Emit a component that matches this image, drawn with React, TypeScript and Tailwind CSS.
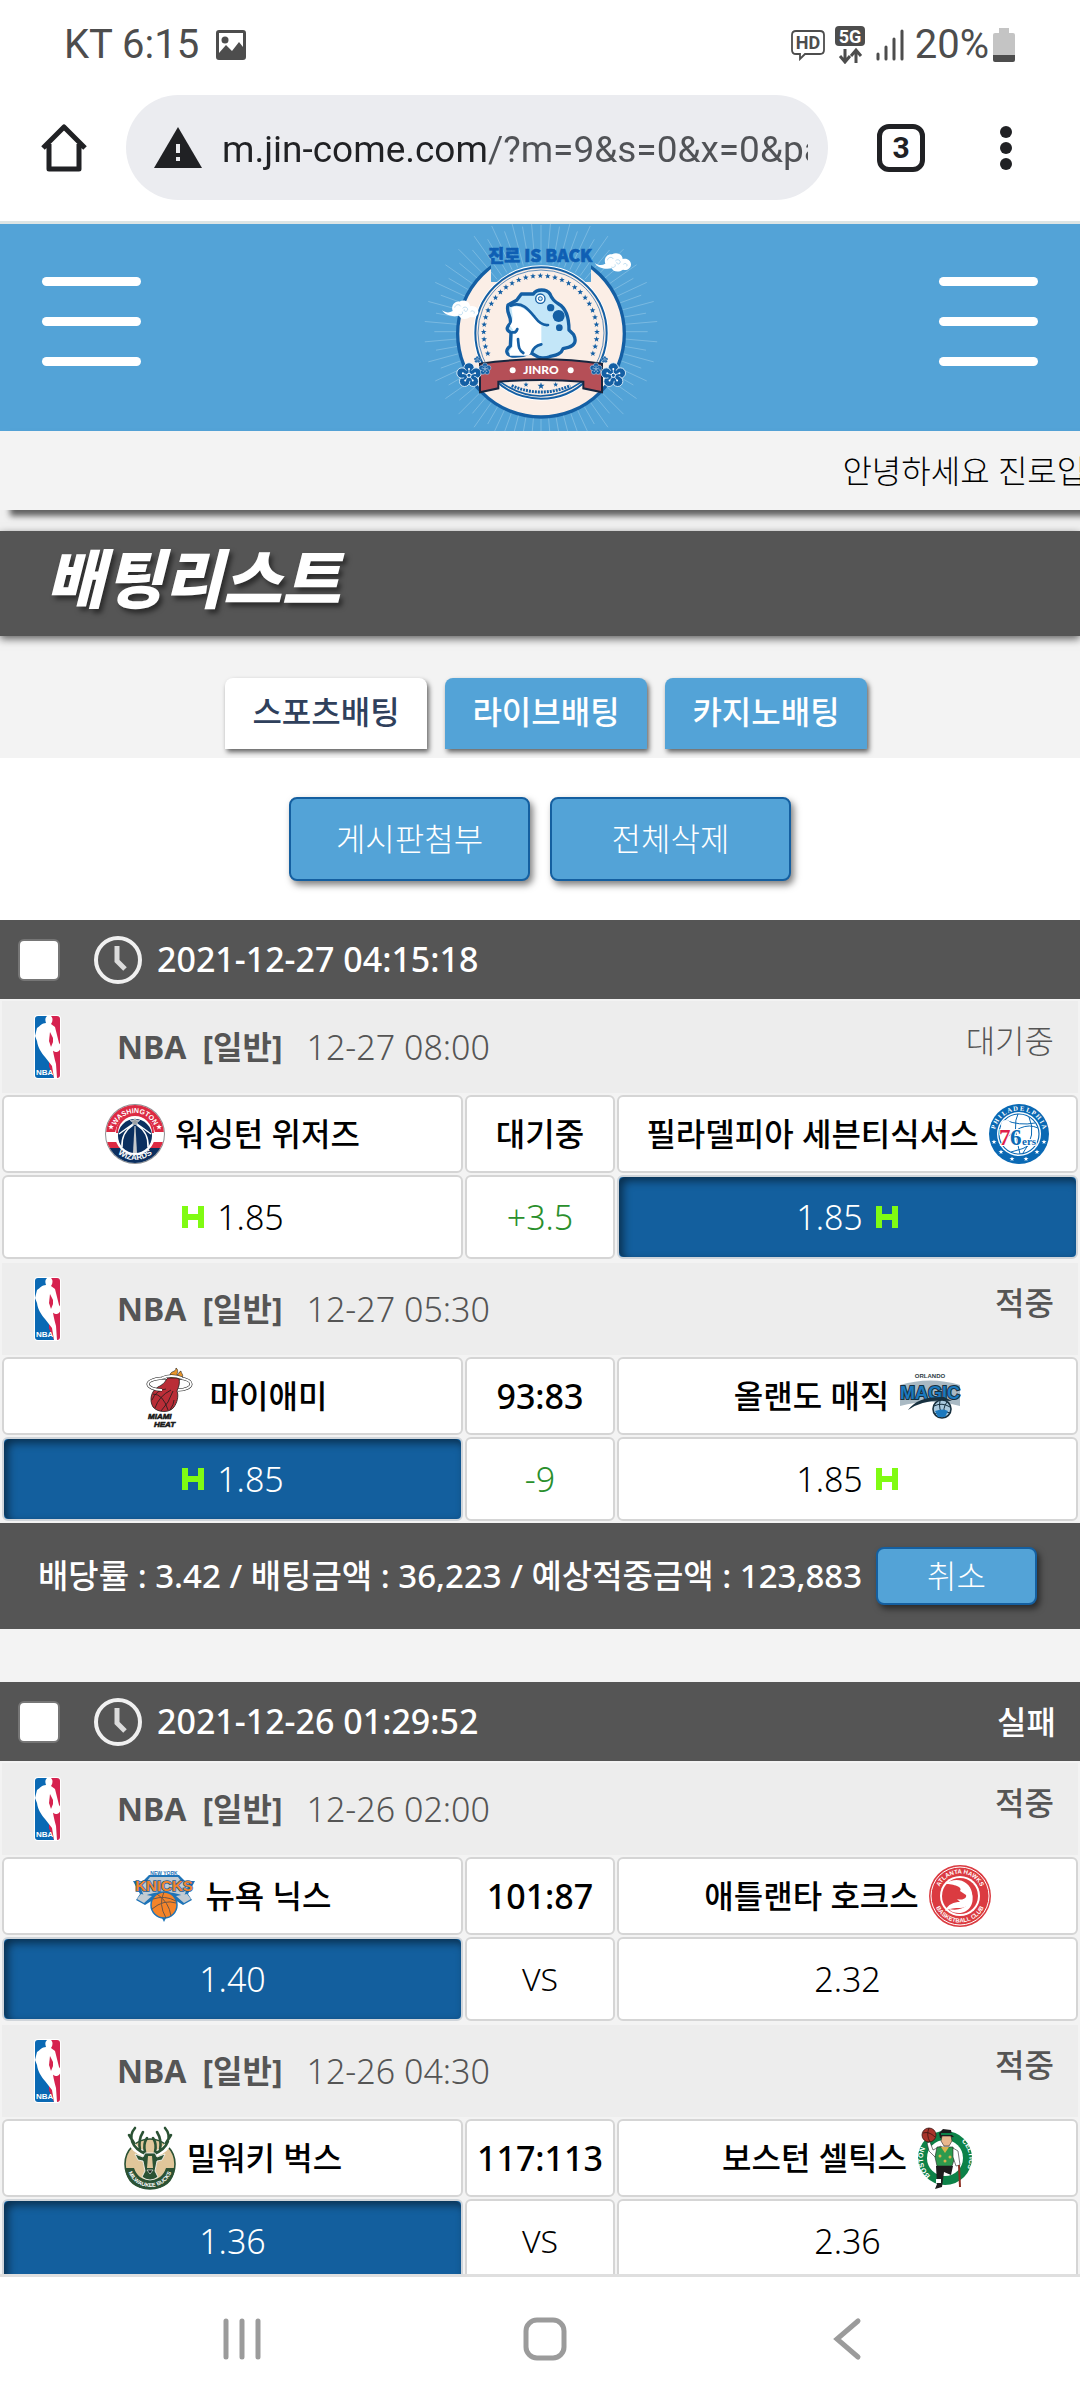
import React from "react";

const NAVY = "#145fa4";
const CREAM = "#fbeee6";

type Side = { name: string; logo: React.ReactNode; odds: string; picked?: boolean };
type Match = {
  id: string;
  time: string;
  status: string;
  pending?: boolean;
  score: string;
  line: string;
  handicap?: boolean;
  home: Side;
  away: Side;
};

function starPoints(cx: number, cy: number, r: number) {
  return Array.from({ length: 10 }, (_, i) => {
    const a = (Math.PI / 5) * i - Math.PI / 2;
    const d = i % 2 ? r * 0.42 : r;
    return `${(cx + d * Math.cos(a)).toFixed(1)},${(cy + d * Math.sin(a)).toFixed(1)}`;
  }).join(" ");
}

function Flower({ x, y, r }: { x: number; y: number; r: number }) {
  const petals = [0, 1, 2, 3, 4].map((i) => (Math.PI * 2 * i) / 5 - Math.PI / 2);
  return (
    <g>
      {petals.map((a) => (
        <circle
          key={a}
          cx={x + Math.cos(a) * r * 0.6}
          cy={y + Math.sin(a) * r * 0.6}
          r={r * 0.42}
          fill={NAVY}
          stroke="#e6f3fb"
          strokeWidth={r * 0.07}
        />
      ))}
      <circle cx={x} cy={y} r={r * 0.45} fill={NAVY} />
      {petals.map((a) => (
        <g key={a}>
          <line
            x1={x}
            y1={y}
            x2={x + Math.cos(a) * r * 0.5}
            y2={y + Math.sin(a) * r * 0.5}
            stroke="#fff"
            strokeWidth={r * 0.06}
          />
          <circle
            cx={x + Math.cos(a) * r * 0.52}
            cy={y + Math.sin(a) * r * 0.52}
            r={r * 0.08}
            fill="#fff"
          />
        </g>
      ))}
      <circle cx={x} cy={y} r={r * 0.17} fill={NAVY} stroke="#fff" strokeWidth={r * 0.08} />
    </g>
  );
}

function Cloud() {
  return (
    <g>
      <path
        d="M0 30c12 8 22 8 32 2c-6-16 6-30 20-28c14-8 32 0 32 14c14-4 26 6 25 17c-1 12-12 18-24 15c-14 10-30 6-34-4c-18 4-40 0-51-16z"
        fill="#fff"
      />
      <path
        d="M38 22c2-10 14-12 18-4M62 24c6-8 18-2 14 6c-4 6-12 2-9-3M50 42c8 4 14-2 11-8M86 34c6-6 14 0 10 6"
        fill="none"
        stroke="#9fcbe8"
        strokeWidth="2"
      />
    </g>
  );
}

function JinroLogo() {
  const rays = Array.from({ length: 72 }, (_, i) => {
    const a = (Math.PI * 2 * i) / 72;
    const end = i % 2 ? 350 : 320;
    return [
      423 + 205 * Math.cos(a),
      350 + 205 * Math.sin(a),
      423 + end * Math.cos(a),
      350 + end * Math.sin(a),
    ];
  });
  const lines = rays.map(([x1, y1, x2, y2], i) => (
    <line key={i} x1={x1} y1={y1} x2={x2} y2={y2} stroke="#79b9e1" strokeWidth="3" />
  ));
  const stars = Array.from({ length: 31 }, (_, i) => {
    const a = ((-202 + (224 / 30) * i) * Math.PI) / 180;
    return starPoints(421 + 170 * Math.cos(a), 352 + 170 * Math.sin(a), 9);
  });

  return (
    <svg viewBox="0 27 840 621" className="h-[207px] w-[280px]" role="img" aria-label="진로 IS BACK">
      <defs>
        <clipPath id="title-gap">
          <rect x="273" y="60" width="300" height="141" />
        </clipPath>
      </defs>
      {lines}
      <circle cx="423" cy="356" r="250" fill={CREAM} stroke={NAVY} strokeWidth="10" />
      <g clipPath="url(#title-gap)">
        <rect x="273" y="60" width="300" height="141" fill="#53a3d7" />
        {lines}
      </g>
      <circle cx="423" cy="354" r="200" fill={CREAM} stroke="#fff" strokeWidth="6" />
      <circle cx="423" cy="354" r="197" fill="none" stroke={NAVY} strokeWidth="6" />
      <circle cx="423" cy="354" r="189" fill="none" stroke={NAVY} strokeWidth="2" />
      {stars.map((p) => (
        <polygon key={p} points={p} fill={NAVY} />
      ))}
      <text
        x="421"
        y="142"
        textAnchor="middle"
        fontFamily="'Noto Sans CJK KR',sans-serif"
        fontWeight="900"
        fontSize="52"
        fill="#0f5fb4"
        stroke="#0f5fb4"
        strokeWidth="2"
      >
        진로 IS BACK
      </text>

      {/* toad */}
      <path
        d="M324 270l26-14l14-19h36c10-16 40-16 50 0c6 16 12 22 26 30c24 14 31 40 31 78l14 14c10 20 2 34-16 38l-16 4c-6 18-24 20-40 24c-14 6-34 4-40-2c-8-4-12-6-16-10c-18 8-30 12-56 10c-20-4-22-18-6-30l2-40c-16-8-14-16-2-28c4-24-14-28-7-55z"
        fill="#c3e6f8"
        stroke={NAVY}
        strokeWidth="10"
        strokeLinejoin="round"
      />
      <path
        d="M334 278c34-16 60 24 90 52v56l-22 12l-16 24h-56c-4-10 0-18 8-26l2-50l-10-14c10-14 10-24 4-54z"
        fill="#fff"
      />
      <path
        d="M332 272c34-14 54 12 72 34c12 16 24 26 40 24M354 372c2 18 0 32 16 42M424 388c-16 4-24 10-28 24M338 352c8 2 12-4 14-10"
        fill="none"
        stroke={NAVY}
        strokeWidth="8"
        strokeLinecap="round"
      />
      <circle cx="421" cy="251" r="14" fill="#fff" stroke={NAVY} strokeWidth="4" />
      <circle cx="421" cy="251" r="6" fill="#c3e6f8" stroke={NAVY} strokeWidth="3" />
      <circle cx="452" cy="278" r="11" fill={NAVY} />
      <circle cx="476" cy="303" r="18" fill={NAVY} />
      <circle cx="478" cy="338" r="10" fill={NAVY} />

      {/* ribbon and small print */}
      <path d="M300 500q120 86 246 0" fill={CREAM} stroke={NAVY} strokeWidth="5" />
      <path d="M335 512q88 38 176 0" fill="none" stroke={NAVY} strokeWidth="9" strokeDasharray="6 3" />
      <path
        d="M240 446q183-26 366 0v86l-56-12v-20q-127-10-255 0v20l-55 12z"
        fill="#b54f57"
        stroke="#17263f"
        strokeWidth="6"
      />
      <polygon points={starPoints(378, 509, 8)} fill={NAVY} />
      <polygon points={starPoints(423, 513, 11)} fill={NAVY} />
      <polygon points={starPoints(467, 509, 8)} fill={NAVY} />
      <circle cx="338" cy="466" r="9" fill="#fff" />
      <circle cx="512" cy="466" r="9" fill="#fff" />
      <text
        x="423"
        y="477"
        textAnchor="middle"
        fontFamily="Lato,sans-serif"
        fontWeight="900"
        fontSize="36"
        fill="#fff"
      >
        JINRO
      </text>
      <Flower x={207} y={481} r={37} />
      <Flower x={640} y={481} r={37} />
      <Flower x={255} y={462} r={18} />
      <Flower x={588} y={462} r={18} />
      <Flower x={232} y={434} r={10} />
      <Flower x={614} y={434} r={10} />
      <g transform="translate(584 114)">
        <Cloud />
      </g>
      <g transform="translate(126 256)">
        <Cloud />
      </g>
    </svg>
  );
}

function NbaLogo() {
  return (
    <svg viewBox="0 0 27 64" className="h-16 w-[27px]" role="img" aria-label="NBA">
      <rect width="27" height="64" rx="4" fill="#fff" />
      <path d="M4 1H15V63H4Q1 63 1 60V4Q1 1 4 1Z" fill="#0a69b4" />
      <path d="M15 1H23Q26 1 26 4V60Q26 63 23 63H15Z" fill="#d6224f" />
      <path d="M11 42l9 21h-8z" fill="#0a69b4" />
      <path
        d="M13 1h4c2 2 2 5 0 8l4 3l2 8l2 8c3 3 2 8-2 9c-4 0-6-3-5-7c1 6 2 12 4 19l1 14h-3l-2-12l-7-9c-4-5-7-9-8-16l-2-5l2-8c3-2 5-5 9-5c-1-3-1-5 1-7z"
        fill="#fff"
      />
      <path d="M16 17l3 6v4l-2 5l-2-6z" fill="#d6224f" />
      <text x="2" y="60" fontFamily="Liberation Sans,sans-serif" fontWeight="700" fontSize="8" fill="#fff">
        NBA
      </text>
    </svg>
  );
}

function WizardsLogo() {
  return (
    <svg viewBox="0 0 60 60" className="size-[60px]" role="img" aria-label="Washington Wizards">
      <defs>
        <path id="wiz-top" d="M9 30a21 21 0 0 1 42 0" />
        <path id="wiz-bottom" d="M4 30a26 26 0 0 0 52 0" />
        <clipPath id="wiz-clip">
          <circle cx="30" cy="30" r="29" />
        </clipPath>
      </defs>
      <circle cx="30" cy="30" r="30" fill="#8d8f92" />
      <g clipPath="url(#wiz-clip)">
        <rect width="60" height="60" fill="#fff" />
        <rect width="60" height="28" fill="#dc2a43" />
        <rect y="38" width="60" height="6" fill="#dc2a43" />
        <rect y="44" width="60" height="16" fill="#0b2f5f" />
      </g>
      <circle cx="30" cy="31" r="20" fill="#fff" />
      <path d="M12 29a18 18 0 0 1 36 0" fill="none" stroke="#dc2a43" strokeWidth="2" />
      <circle cx="30" cy="32" r="17" fill="#0b2f5f" />
      <path
        d="M28 21q-12 8-11 22M32 21q12 8 11 22M14 30q8-6 14-10M46 30q-8-6-14-10"
        fill="none"
        stroke="#fff"
        strokeWidth="1.5"
      />
      <path d="M28 49l1.5-27h1l1.5 27z" fill="#c5c9cc" />
      <polygon points={starPoints(30, 18, 5)} fill="#9da0a3" stroke="#fff" strokeWidth="0.5" />
      <polygon points={starPoints(6, 23, 3)} fill="#fff" />
      <polygon points={starPoints(54, 23, 3)} fill="#fff" />
      <g fontFamily="Liberation Sans,sans-serif" fontWeight="700" fill="#fff">
        <text fontSize="7" textAnchor="middle">
          <textPath href="#wiz-top" startOffset="50%">WASHINGTON</textPath>
        </text>
        <text fontSize="8" textAnchor="middle">
          <textPath href="#wiz-bottom" startOffset="50%">WIZARDS</textPath>
        </text>
      </g>
    </svg>
  );
}

function SixersLogo() {
  return (
    <svg viewBox="0 0 60 60" className="size-[60px]" role="img" aria-label="Philadelphia 76ers">
      <defs>
        <path id="phi-ring" d="M6 36a24.5 24.5 0 1 1 48 0" />
      </defs>
      <circle cx="30" cy="30" r="30" fill="#0a69b4" />
      <circle cx="30" cy="30" r="22" fill="#fff" />
      <circle cx="30" cy="30" r="20" fill="#fff" stroke="#0a69b4" strokeWidth="1.2" />
      <path
        d="M16 16q14 6 30 3M29 10q-6 10 2 40M40 13q8 18-6 36M12 40q20-24 37-16M22 48q12-2 24-10"
        fill="none"
        stroke="#0a69b4"
        strokeWidth="1"
      />
      <circle cx="17" cy="21" r="5" fill="#fff" />
      <g fontFamily="Liberation Serif,serif" fontWeight="700">
        <text fontSize="6.5" fill="#fff" textAnchor="middle">
          <textPath href="#phi-ring" startOffset="50%">P H I L A D E L P H I A</textPath>
        </text>
        <g stroke="#fff" strokeWidth="2" paintOrder="stroke">
          <text x="10" y="41" fontSize="23" fill="#e01f4c">7</text>
          <text x="21" y="41" fontSize="23" fill="#0a69b4">6</text>
          <text x="33" y="41" fontSize="11" fill="#0a69b4">ers</text>
        </g>
      </g>
      {[[5, 38], [12, 48], [23, 55], [37, 55], [48, 48], [55, 38]].map(([x, y]) => (
        <polygon key={x} points={starPoints(x, y, 2.6)} fill="#fff" />
      ))}
    </svg>
  );
}

function HeatLogo() {
  return (
    <svg viewBox="0 0 62 64" className="h-16 w-[62px]" role="img" aria-label="Miami Heat">
      <path d="M32 12c0-6 6-3 6-8c3 2 1 5 1 7c2 0 1-3 4-4c0 3 3 3 1 7l-4 3h-8z" fill="#e8952b" stroke="#1d1d1d" strokeWidth="0.6" />
      <path
        d="M29 14h12c1 6 0 8-2 13c2 5 0 12-3 16c-4 6-16 6-21 0c-4-7-2-16 5-20c4-2 7-4 9-9z"
        fill="#ba2d37"
        stroke="#1d1d1d"
        strokeWidth="0.8"
      />
      <path
        d="M14 36q4-10 14-11M17 44q4-12 16-18M23 47q8-8 12-20M32 46q4-6 4-10M15 30q10 0 15 16"
        fill="none"
        stroke="#1d1d1d"
        strokeWidth="0.8"
      />
      <path d="M29 14c-12 0-19 3-19 6s6 6 14 6M41 14c8 1 12 3 12 6s-5 6-13 6" fill="none" stroke="#1d1d1d" strokeWidth="3" />
      <path d="M29 14c-12 0-19 3-19 6s6 6 14 6M41 14c8 1 12 3 12 6s-5 6-13 6" fill="none" stroke="#fff" strokeWidth="1.8" />
      <path d="M24 14q9-4 20 0" fill="none" stroke="#1d1d1d" strokeWidth="3" />
      <path d="M24 14q9-4 20 0" fill="none" stroke="#fff" strokeWidth="2" />
      <g fontFamily="Liberation Sans,sans-serif" fontWeight="700" fontStyle="italic" fontSize="8" fill="#1a1a1a" stroke="#1a1a1a" strokeWidth="0.6">
        <text x="10" y="55">MIAMI</text>
        <text x="16" y="63">HEAT</text>
      </g>
    </svg>
  );
}

function MagicLogo() {
  return (
    <svg viewBox="0 0 62 50" className="h-[50px] w-[62px]" role="img" aria-label="Orlando Magic">
      <text
        x="31"
        y="7"
        textAnchor="middle"
        fontFamily="Liberation Sans,sans-serif"
        fontWeight="700"
        fontSize="6"
        fill="#2c3a42"
      >
        ORLANDO
      </text>
      <path d="M1 14q30-9 60 0v21q-30-8-60 0z" fill="#a9b9c3" />
      <g
        fontFamily="Liberation Sans,sans-serif"
        fontWeight="700"
        fontSize="18"
        textAnchor="middle"
        fill="#1c79be"
        stroke="#17303f"
        strokeWidth="2"
        paintOrder="stroke"
      >
        <text x="31" y="28">MAGIC</text>
      </g>
      <path d="M9 39q10-14 36-13l8 4q-28-3-44 9z" fill="#17303f" />
      <circle cx="43" cy="38" r="9" fill="#a9c9de" stroke="#17303f" strokeWidth="1.6" />
      <path d="M35 35q8-4 16 1M36 43q8-4 15-1M41 30q-2 8 4 16M48 31q-5 6-2 15" fill="none" stroke="#17303f" strokeWidth="1" />
      <path d="M36 40q8-3 13 0l-3 6h-7z" fill="#1c79be" />
    </svg>
  );
}

function KnicksLogo() {
  return (
    <svg viewBox="0 0 62 54" className="h-[54px] w-[62px]" role="img" aria-label="New York Knicks">
      <path d="M0 12h10l6-6h30l6 6h10l-7 13l4 6l-9 5l-8-5l-11 22l-11-22l-8 5l-9-5l4-6z" fill="#1e74b8" />
      <path d="M8 25l-4 5l7 4l8-7zM54 25l4 5l-7 4l-8-7z" fill="#c2cbd2" />
      <path d="M5 13l9-1l3-4h28l3 4l9 1l-6 14q-20-8-40 0z" fill="#c2cbd2" />
      <g fontFamily="Liberation Sans,sans-serif" fontWeight="700" textAnchor="middle">
        <text x="31" y="6" fontSize="5" fill="#1e74b8">
          NEW YORK
        </text>
        <text x="31" y="22" fontSize="15" fill="#f5842a" stroke="#1e5f96" strokeWidth="1.5" paintOrder="stroke">
          KNICKS
        </text>
      </g>
      <circle cx="31" cy="36" r="13" fill="#f5842a" stroke="#1e74b8" strokeWidth="1.5" />
      <path
        d="M31 23q-6 12 2 26M20 30q12-4 23 2M19 40q12-10 24-6M24 25q12 8 14 22"
        fill="none"
        stroke="#6d5648"
        strokeWidth="1"
      />
    </svg>
  );
}

function HawksLogo() {
  return (
    <svg viewBox="0 0 62 62" className="size-[62px]" role="img" aria-label="Atlanta Hawks">
      <defs>
        <path id="atl-top" d="M8.5 31a22.5 22.5 0 0 1 45 0" />
        <path id="atl-bottom" d="M4.500 31a26.500 26.500 0 0 0 53 0" />
      </defs>
      <circle cx="31" cy="31" r="31" fill="#db3b41" />
      <circle cx="31" cy="31" r="29" fill="none" stroke="#fff" strokeWidth="1" />
      <circle cx="31" cy="31" r="20" fill="#fff" />
      <circle cx="31" cy="31" r="18" fill="#db3b41" />
      <path
        d="M16 19c10-8 25-4 27 9c2 9-5 15-12 15c-5 0-10 0-15 3c3-7 9-9 15-9l-3-3c7 2 10-2 9-4l-6-4c3-4-6-7-15-7z"
        fill="#fff"
      />
      <path d="M20 44c14 3 24-5 22-18c5 12-2 22-12 22c-4 0-8-1-10-4z" fill="#fff" />
      <circle cx="28" cy="27" r="1.6" fill="#db3b41" />
      <g fontFamily="Liberation Sans,sans-serif" fontWeight="700" fontSize="6" fill="#fff" textAnchor="middle">
        <text>
          <textPath href="#atl-top" startOffset="50%">ATLANTA HAWKS</textPath>
        </text>
        <text>
          <textPath href="#atl-bottom" startOffset="50%">BASKETBALL CLUB</textPath>
        </text>
      </g>
    </svg>
  );
}

function BucksLogo() {
  return (
    <svg viewBox="0 0 54 64" className="h-16 w-[54px]" role="img" aria-label="Milwaukee Bucks">
      <defs>
        <path id="mil-bottom" d="M4 38a23 23 0 0 0 46 0" />
      </defs>
      <circle cx="27" cy="38" r="25" fill="#e0c69a" stroke="#2b5234" strokeWidth="1.6" />
      <path d="M2 42h9q4 12 16 12t16-12h9q-2 21-25 21T2 42z" fill="#2b5234" />
      <g fill="none" stroke="#fff" strokeWidth="6" strokeLinejoin="round">
        <path d="M22 28C6 22 4 10 12 2M32 28C48 22 50 10 42 2" />
      </g>
      <g fill="none" stroke="#2b5234" strokeWidth="2.6" strokeLinecap="round" strokeLinejoin="round">
        <path d="M23 28C8 22 5 10 12 2M31 28C46 22 49 10 42 2M11 17L6 9M43 17L48 9M17 24Q15 14 20 6M37 24Q39 14 34 6M22 26Q20 18 24 12M32 26Q34 18 30 12" />
      </g>
      <path d="M22 27h10l2 4l8-3l-3 6l-5 1l-2 10l3 6q-8 6-16 0l3-6l-2-10l-5-1l-3-6l8 3z" fill="#2b5234" stroke="#fff" strokeWidth="0.8" />
      <path d="M25 30h4l1 12h-6z" fill="#e0c69a" />
      <path d="M24 44h6l-3 4z" fill="#14241a" stroke="#fff" strokeWidth="0.6" />
      <text fontFamily="Liberation Sans,sans-serif" fontWeight="700" fontSize="5.5" fill="#fff" textAnchor="middle">
        <textPath href="#mil-bottom" startOffset="50%">MILWAUKEE BUCKS</textPath>
      </text>
    </svg>
  );
}

function CelticsLogo() {
  return (
    <svg viewBox="0 0 56 62" className="h-[62px] w-14" role="img" aria-label="Boston Celtics">
      <defs>
        <path id="bos-left" d="M16 51A24 24 0 0 1 10 18" />
        <path id="bos-right" d="M38 10A24 24 0 0 1 46 48" />
      </defs>
      <circle cx="28" cy="31" r="27" fill="#0d8248" />
      <circle cx="28" cy="31" r="18" fill="#fff" />
      <g fontFamily="Liberation Sans,sans-serif" fontWeight="700" fontSize="7" fill="#fff" textAnchor="middle">
        <text>
          <textPath href="#bos-left" startOffset="50%">BOSTON</textPath>
        </text>
        <text>
          <textPath href="#bos-right" startOffset="50%">CELTICS</textPath>
        </text>
      </g>
      <circle cx="12" cy="8" r="7" fill="#a8342b" stroke="#3a1512" strokeWidth="0.8" />
      <path d="M6 6q6-2 12 4M12 1q-3 7 1 14" fill="none" stroke="#3a1512" strokeWidth="0.8" />
      <path d="M13 15l3 8l8-4l2 5l-8 6l-6-6l-2-8z" fill="#fff" stroke="#222" strokeWidth="0.6" />
      <path d="M22 6l4-4l8 1l1 5l2 2l-14 1z" fill="#1d1d1d" />
      <path d="M24 6h11v2H24z" fill="#0d8248" />
      <path d="M25 9h9l1 5l-3 5h-5l-3-5z" fill="#eab78d" stroke="#222" strokeWidth="0.6" />
      <path d="M20 20h16l2 10l-3 9H20l-2-9z" fill="#2d9a4e" stroke="#222" strokeWidth="0.6" />
      <path d="M24 20h8l-4 6z" fill="#d9b24c" />
      <circle cx="23" cy="29" r="1.5" fill="#d9b24c" />
      <circle cx="33" cy="30" r="1.5" fill="#d9b24c" />
      <circle cx="28" cy="34" r="1.5" fill="#d9b24c" />
      <path d="M36 21l5 3l2 14l-4 1l-3-9z" fill="#fff" stroke="#222" strokeWidth="0.6" />
      <path d="M19 39h17l-2 9l-7-3l-2 15l-7 2l2-5z" fill="#1d1d1d" />
      <path d="M19 52h5v4h-5z" fill="#fff" />
      <path d="M42 38l1 22" stroke="#8d2f22" strokeWidth="2" />
    </svg>
  );
}

const slips: {
  id: string;
  placedAt: string;
  result?: string;
  summary?: string;
  matches: Match[];
}[] = [
  {
    id: "slip-1",
    placedAt: "2021-12-27 04:15:18",
    summary: "배당률 : 3.42 / 배팅금액 : 36,223 / 예상적중금액 : 123,883",
    matches: [
      {
        id: "was-phi",
        time: "12-27 08:00",
        status: "대기중",
        pending: true,
        score: "대기중",
        line: "+3.5",
        handicap: true,
        home: { name: "워싱턴 위저즈", logo: <WizardsLogo />, odds: "1.85" },
        away: { name: "필라델피아 세븐티식서스", logo: <SixersLogo />, odds: "1.85", picked: true },
      },
      {
        id: "mia-orl",
        time: "12-27 05:30",
        status: "적중",
        score: "93:83",
        line: "-9",
        handicap: true,
        home: { name: "마이애미", logo: <HeatLogo />, odds: "1.85", picked: true },
        away: { name: "올랜도 매직", logo: <MagicLogo />, odds: "1.85" },
      },
    ],
  },
  {
    id: "slip-2",
    placedAt: "2021-12-26 01:29:52",
    result: "실패",
    matches: [
      {
        id: "nyk-atl",
        time: "12-26 02:00",
        status: "적중",
        score: "101:87",
        line: "VS",
        home: { name: "뉴욕 닉스", logo: <KnicksLogo />, odds: "1.40", picked: true },
        away: { name: "애틀랜타 호크스", logo: <HawksLogo />, odds: "2.32" },
      },
      {
        id: "mil-bos",
        time: "12-26 04:30",
        status: "적중",
        score: "117:113",
        line: "VS",
        home: { name: "밀워키 벅스", logo: <BucksLogo />, odds: "1.36", picked: true },
        away: { name: "보스턴 셀틱스", logo: <CelticsLogo />, odds: "2.36" },
      },
    ],
  },
];

function HandicapMark() {
  return (
    <svg viewBox="0 0 24 24" className="size-6" aria-hidden="true">
      <path d="M1 1h6v8h10V1h6v22h-6v-8H7v8H1z" fill="#80fb12" />
    </svg>
  );
}

function OddsCell({ side, handicap, away }: { side: Side; handicap?: boolean; away?: boolean }) {
  return (
    <td
      className={
        side.picked
          ? "h-[84px] rounded-md border-2 border-[#d0d5da] bg-[#135f9e] p-0 font-light text-white shadow-[inset_4px_4px_8px_rgba(0,0,0,0.5)]"
          : "h-[84px] rounded-md border-2 border-[#d5d5d5] bg-white p-0 font-light text-black"
      }
    >
      <div className="flex items-center justify-center gap-3 text-[34px]">
        {handicap && !away && <HandicapMark />}
        <span>{side.odds}</span>
        {handicap && away && <HandicapMark />}
      </div>
    </td>
  );
}

function MatchTable({ match }: { match: Match }) {
  return (
    <table className="w-full table-fixed border-separate border-spacing-[2px] bg-[#f3f3f3] text-center leading-10">
      <colgroup>
        <col className="w-[43%]" />
        <col className="w-[14%]" />
        <col className="w-[43%]" />
      </colgroup>
      <tbody>
        <tr>
          <td colSpan={3} className="h-[92px] bg-[#ededed] p-0 text-[#555]">
            <div className="flex items-center pr-6 pl-8">
              <NbaLogo />
              <span className="ml-14 font-bold">NBA</span>
              <span className="ml-4 font-bold">[일반]</span>
              <span className="ml-6 text-[34px] font-light">{match.time}</span>
              <span className={match.pending ? "mb-3 ml-auto font-light" : "mb-3 ml-auto font-medium"}>
                {match.status}
              </span>
            </div>
          </td>
        </tr>
        <tr className="font-medium text-black">
          <td className="h-[78px] rounded-md border-2 border-[#d5d5d5] bg-white p-0">
            <div className="flex items-center justify-center gap-2.5">
              {match.home.logo}
              {match.home.name}
            </div>
          </td>
          <td className="h-[78px] rounded-md border-2 border-[#d5d5d5] bg-white p-0">
            <span className={match.pending ? "" : "text-[34px]"}>{match.score}</span>
          </td>
          <td className="h-[78px] rounded-md border-2 border-[#d5d5d5] bg-white p-0">
            <div className="flex items-center justify-center gap-2.5">
              {match.away.name}
              {match.away.logo}
            </div>
          </td>
        </tr>
        <tr>
          <OddsCell side={match.home} handicap={match.handicap} />
          <td
            className={
              match.handicap
                ? "h-[84px] rounded-md border-2 border-[#d5d5d5] bg-white p-0 text-[34px] font-light text-[#2a8f2c]"
                : "h-[84px] rounded-md border-2 border-[#d5d5d5] bg-white p-0 font-light text-black"
            }
          >
            {match.line}
          </td>
          <OddsCell side={match.away} handicap={match.handicap} away />
        </tr>
      </tbody>
    </table>
  );
}

function StatusBar() {
  return (
    <div className="flex h-[90px] items-center justify-between pr-[65px] pl-16 font-[Roboto,sans-serif] text-[40px] text-[#4d4d4d]">
      <div className="flex items-center gap-4">
        <span>KT 6:15</span>
        <svg viewBox="0 0 32 32" className="size-8" aria-hidden="true">
          <path
            fillRule="evenodd"
            d="M4 1h24q3 0 3 3v24q0 3-3 3H4q-3 0-3-3V4q0-3 3-3zM4 4v20l7-8l6 6l7-9l4 5V4z"
            fill="#4d4d4d"
          />
          <circle cx="10" cy="11" r="3.5" fill="#4d4d4d" />
        </svg>
      </div>
      <div className="flex items-center gap-2.5">
        <svg viewBox="0 0 34 32" className="h-8 w-[34px]" aria-hidden="true">
          <path d="M5 2h24q4 0 4 4v15q0 4-4 4H14l-5 5v-5H5q-4 0-4-4V6q0-4 4-4z" fill="none" stroke="#4d4d4d" strokeWidth="1.8" />
          <text x="17" y="20" textAnchor="middle" fontFamily="Roboto,sans-serif" fontWeight="700" fontSize="18" fill="#4d4d4d">
            HD
          </text>
        </svg>
        <svg viewBox="0 0 30 38" className="h-[38px] w-[30px]" aria-hidden="true">
          <rect width="30" height="20" rx="4" fill="#4d4d4d" />
          <text x="15" y="17" textAnchor="middle" fontFamily="Roboto,sans-serif" fontWeight="700" fontSize="18" fill="#fff">
            5G
          </text>
          <path d="M10 23v12M5 30l5 6l5-6M21 37V25M16 30l5-6l5 6" fill="none" stroke="#4d4d4d" strokeWidth="3" />
        </svg>
        <svg viewBox="0 0 30 32" className="h-8 w-[30px]" aria-hidden="true">
          <path d="M3 25v5M11 18v12M19 10v20M27 2v28" stroke="#4d4d4d" strokeWidth="3" strokeLinecap="round" />
        </svg>
        <div className="flex items-center gap-1">
          <span>20%</span>
          <svg viewBox="0 0 22 34" className="h-[34px] w-[22px]" aria-hidden="true">
            <path d="M6 0h10v5h4q2 0 2 2v20H0V7q0-2 2-2h4z" fill="#c4c4c4" />
            <path d="M0 27h22v5q0 2-2 2H2q-2 0-2-2z" fill="#4d4d4d" />
          </svg>
        </div>
      </div>
    </div>
  );
}

function BrowserBar() {
  return (
    <div className="flex h-[134px] items-start border-b-3 border-[#dde5e5] pt-[5px] pr-[62px] pl-[38px] font-[Roboto,sans-serif]">
      <div className="flex h-[105px] w-full items-center">
        <button type="button" aria-label="홈">
          <svg viewBox="0 0 52 52" className="size-[52px]">
            <path d="M5 26L26 5l21 21M11 22v25h30V22" fill="none" stroke="#202124" strokeWidth="5" strokeLinejoin="round" />
          </svg>
        </button>
        <div className="ml-9 flex h-full flex-1 items-center rounded-full bg-[#ebecf0] pr-5 pl-7">
          <svg viewBox="0 0 48 41" className="h-[41px] w-12 shrink-0" aria-hidden="true">
            <path d="M24 0l24 41H0z" fill="#202124" />
            <path d="M22 17h4v9h-4zM22 30h4v4h-4z" fill="#ebecf0" />
          </svg>
          <input
            type="text"
            readOnly
            aria-label="주소"
            value="m.jin-come.com/?m=9&s=0&x=0&page=1"
            className="mt-1 ml-5 w-0 flex-1 bg-[linear-gradient(to_right,#202124_266px,#505256_266px)] bg-clip-text text-[37px] text-transparent outline-none"
          />
        </div>
        <button
          type="button"
          aria-label="탭 3개"
          className="ml-[49px] flex size-12 items-center justify-center rounded-xl border-[5px] border-[#202124] text-3xl font-bold text-[#202124]"
        >
          3
        </button>
        <button type="button" aria-label="더보기" className="ml-[69px]">
          <svg viewBox="0 0 24 48" className="h-12 w-6">
            <circle cx="12" cy="8" r="6" fill="#202124" />
            <circle cx="12" cy="24" r="6" fill="#202124" />
            <circle cx="12" cy="40" r="6" fill="#202124" />
          </svg>
        </button>
      </div>
    </div>
  );
}

function MenuButton({ label }: { label: string }) {
  return (
    <button type="button" aria-label={label} className="flex flex-col gap-[31px] pb-3">
      <span className="h-[9px] w-[99px] rounded-full bg-white" />
      <span className="h-[9px] w-[99px] rounded-full bg-white" />
      <span className="h-[9px] w-[99px] rounded-full bg-white" />
    </button>
  );
}

export default function App() {
  return (
    <div className="flex h-dvh flex-col overflow-hidden bg-white font-['Noto_Sans','Noto_Sans_CJK_KR',sans-serif] text-[32px]">
      <StatusBar />
      <BrowserBar />

      <main className="min-h-0 flex-1 overflow-y-auto [scrollbar-width:none]">
        <header className="flex h-[207px] items-center justify-between bg-[#53a3d7] px-[42px]">
          <MenuButton label="메뉴" />
          <JinroLogo />
          <MenuButton label="내 정보" />
        </header>

        <div className="bg-[#f0f0f0] pb-[21px]">
          <div className="h-[79px] overflow-x-clip bg-[#f3f3f3] shadow-[10px_6px_6px_rgba(0,0,0,0.6)]">
            <p className="pl-[78%] leading-[79px] font-light whitespace-nowrap text-black">
              안녕하세요 진로입니다
            </p>
          </div>
        </div>
        <section className="bg-[#f3f3f3] pb-[9px]">
          <h1 className="h-[105px] bg-[#555] pl-[46px] text-[64px] leading-[96px] font-black text-white italic shadow-[0_3px_8px_rgba(0,0,0,0.6)] [text-shadow:3px_4px_5px_rgba(0,0,0,0.5)]">
            배팅리스트
          </h1>
          <nav className="mt-[42px] flex justify-center gap-[18px] pl-3 font-medium">
            <button type="button" className="h-[71px] w-[202px] rounded-t-lg bg-white pb-1 text-[#2f405c] shadow-[2px_3px_5px_rgba(0,0,0,0.6)]">
              스포츠배팅
            </button>
            <button type="button" className="h-[71px] w-[202px] rounded-t-lg bg-[#53a3d7] pb-1 text-white shadow-[2px_3px_5px_rgba(0,0,0,0.6)]">
              라이브배팅
            </button>
            <button type="button" className="h-[71px] w-[202px] rounded-t-lg bg-[#53a3d7] pb-1 text-white shadow-[2px_3px_5px_rgba(0,0,0,0.6)]">
              카지노배팅
            </button>
          </nav>
        </section>

        <div className="flex justify-center gap-5 pt-[39px] pb-[39px] font-light text-white">
          <button type="button" className="h-[84px] w-[241px] rounded-lg border-2 border-[#145fa0] bg-[#53a3d7] shadow-[3px_4px_7px_rgba(0,0,0,0.5)]">
            게시판첨부
          </button>
          <button type="button" className="h-[84px] w-[241px] rounded-lg border-2 border-[#145fa0] bg-[#53a3d7] shadow-[3px_4px_7px_rgba(0,0,0,0.5)]">
            전체삭제
          </button>
        </div>

        <div className="flex flex-col gap-[53px] bg-[#f3f3f3]">
          {slips.map((slip) => (
            <article key={slip.id}>
              <div className="flex h-[79px] items-center bg-[#555] pr-6 pl-[18px] font-medium text-white">
                <input
                  id={slip.id}
                  type="checkbox"
                  className="size-[42px] appearance-none rounded-md border-2 border-[#767676] bg-white"
                />
                <label htmlFor={slip.id} className="ml-[33px] flex items-center gap-3.5">
                  <svg viewBox="0 0 50 50" className="size-[50px]" aria-hidden="true">
                    <circle cx="25" cy="25" r="22" fill="none" stroke="#f0f0f0" strokeWidth="4" />
                    <path d="M24 11v15l8 8" fill="none" stroke="#dcdcdc" strokeWidth="5" />
                  </svg>
                  <span className="text-[34px]">{slip.placedAt}</span>
                </label>
                {slip.result && <span className="ml-auto">{slip.result}</span>}
              </div>
              {slip.matches.map((match) => (
                <MatchTable key={match.id} match={match} />
              ))}
              {slip.summary && (
                <div className="flex h-[106px] items-center justify-between bg-[#555] pr-[43px] pl-[38px] font-medium text-white">
                  <span className="text-[33px] whitespace-nowrap">{slip.summary}</span>
                  <button
                    type="button"
                    className="h-[58px] w-[161px] rounded-lg border-2 border-[#145fa0] bg-[#53a3d7] font-light shadow-[3px_4px_6px_rgba(0,0,0,0.5)]"
                  >
                    <span className="block leading-[50px]">취소</span>
                  </button>
                </div>
              )}
            </article>
          ))}
        </div>
      </main>

      <nav className="flex h-[126px] items-center justify-between border-t-3 border-[#dfdfdf] bg-white pr-[208px] pl-[217px]">
        <button type="button" aria-label="최근 앱">
          <svg viewBox="0 0 50 50" className="size-[50px]">
            <path d="M9 7v36M25 7v36M41 7v36" stroke="#9b9b9b" strokeWidth="5" strokeLinecap="round" />
          </svg>
        </button>
        <button type="button" aria-label="홈 화면">
          <svg viewBox="0 0 50 50" className="size-[50px]">
            <rect x="6" y="6" width="38" height="38" rx="11" fill="none" stroke="#9b9b9b" strokeWidth="5" />
          </svg>
        </button>
        <button type="button" aria-label="뒤로">
          <svg viewBox="0 0 50 50" className="size-[50px]">
            <path d="M36 7L15 25l21 18" fill="none" stroke="#9b9b9b" strokeWidth="5" strokeLinecap="round" />
          </svg>
        </button>
      </nav>
    </div>
  );
}
